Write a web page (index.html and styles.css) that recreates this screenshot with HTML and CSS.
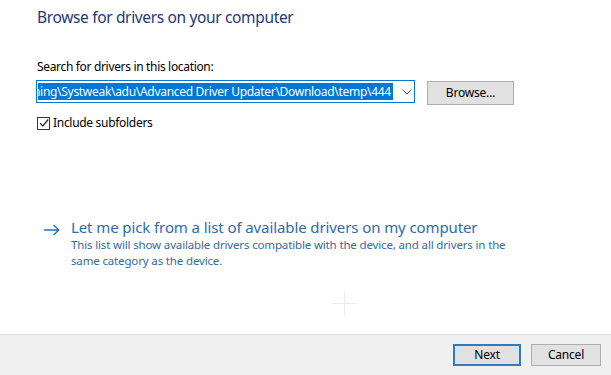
FILE: index.html
```html
<!doctype html>
<html>
<head>
<meta charset="utf-8">
<title>Update Drivers</title>
<link rel="stylesheet" href="styles.css">
</head>
<body>
<div class="wizard">
	<div class="content">
		<h1 class="title">Browse for drivers on your computer</h1>

		<div class="label">Search for drivers in this location:</div>
		<div class="path-row">
			<div class="combo">
				<span class="sel">hing\Systweak\adu\Advanced Driver Updater\Download\temp\444</span>
				<svg class="caret" width="10" height="6" viewBox="0 0 10 6"><path d="M0.5 0.5 L5 5 L9.5 0.5" fill="none" stroke="#555" stroke-width="1"/></svg>
			</div>
			<span class="btn browse">Browse...</span>
		</div>

		<label class="check">
			<span class="box"><svg width="10" height="10" viewBox="0 0 10 10"><path d="M1 5.2 L3.8 8 L9.2 1.5" fill="none" stroke="#222" stroke-width="1.2"/></svg></span>
			Include subfolders
		</label>

		<div class="pick">
			<svg class="arrow" width="16" height="12" viewBox="0 0 16 12"><path d="M0 6 H14.5 M9.5 1 L14.8 6 L9.5 11" fill="none" stroke="#2a6fb5" stroke-width="1.4"/></svg>
			<div class="pick-text">
				<div class="pick-title">Let me pick from a list of available drivers on my computer</div>
				<div class="pick-desc">This list will show available drivers compatible with the device, and all drivers in the same category as the device.</div>
			</div>
		</div>

		<div class="cursor"></div>
	</div>

	<div class="footer">
		<span class="btn next">Next</span>
		<span class="btn">Cancel</span>
	</div>
</div>
</body>
</html>
```

FILE: styles.css
```css
* {
	margin: 0;
	padding: 0;
	box-sizing: border-box;
}

html, body {
	height: 100%;
}

body {
	background: #fff;
	font-family: "Noto Sans", "Open Sans", sans-serif;
	font-size: 12px;
	color: #000;
}

.wizard {
	height: 375px;
	display: flex;
	flex-direction: column;
}

.content {
	flex: 1;
	padding: 6px 0 0 37px;
	position: relative;
}

.title {
	font-size: 15.5px;
	font-weight: normal;
	color: #22397a;
	line-height: 22px;
	letter-spacing: -0.35px;
}

.label {
	margin-top: 31px;
	line-height: 16px;
	letter-spacing: -0.33px;
}

.path-row {
	display: flex;
	align-items: flex-start;
	margin-top: 5px;
}

.combo {
	width: 379px;
	height: 23px;
	margin-left: -1px;
	border: 1px solid #0078d7;
	display: flex;
	align-items: center;
	padding: 0 0 0 1px;
	overflow: hidden;
}

.combo .sel {
	background: #0078d7;
	color: #fff;
	height: 17px;
	line-height: 17px;
	width: 355px;
	flex: none;
	white-space: nowrap;
	overflow: hidden;
	letter-spacing: -0.3px;
	text-indent: -5px;
}

.combo .caret {
	margin-left: 9px;
}

.btn {
	display: inline-block;
	width: 70px;
	height: 22px;
	line-height: 20px;
	text-align: center;
	background: #e1e1e1;
	border: 1px solid #adadad;
	letter-spacing: -0.2px;
}

.browse {
	width: 87px;
	height: 24px;
	line-height: 22px;
	margin-left: 12px;
	margin-top: 1px;
}

.check {
	display: flex;
	align-items: center;
	margin-top: 10px;
	line-height: 16px;
	letter-spacing: -0.3px;
}

.check .box {
	width: 13px;
	height: 13px;
	border: 1px solid #333;
	display: flex;
	align-items: center;
	justify-content: center;
	margin-right: 3px;
}

.pick {
	display: flex;
	margin-top: 87px;
	margin-left: 7px;
	color: #2a6fb5;
}

.pick .arrow {
	margin-top: 6px;
	margin-right: 11px;
}

.pick-title {
	font-size: 15px;
	line-height: 19px;
	color: #2b6cb0;
	letter-spacing: -0.1px;
}

.pick-desc {
	width: 440px;
	line-height: 16px;
	color: #2b6cb0;
	font-size: 11.5px;
	letter-spacing: -0.15px;
}

.cursor {
	position: absolute;
	left: 332px;
	top: 291px;
	width: 25px;
	height: 25px;
	background:
		linear-gradient(#ececec, #ececec) 12px 0 / 1px 25px no-repeat,
		linear-gradient(#ececec, #ececec) 0 12px / 25px 1px no-repeat;
}

.footer {
	height: 41px;
	background: #f0f0f0;
	border-top: 1px solid #dfdfdf;
	display: flex;
	justify-content: flex-end;
	align-items: center;
	padding-right: 10px;
	gap: 10px;
}

.footer .btn {
	height: 22px;
}

.next {
	border: 2px solid #2e7bc4;
	line-height: 18px;
	width: 68px;
}
```
